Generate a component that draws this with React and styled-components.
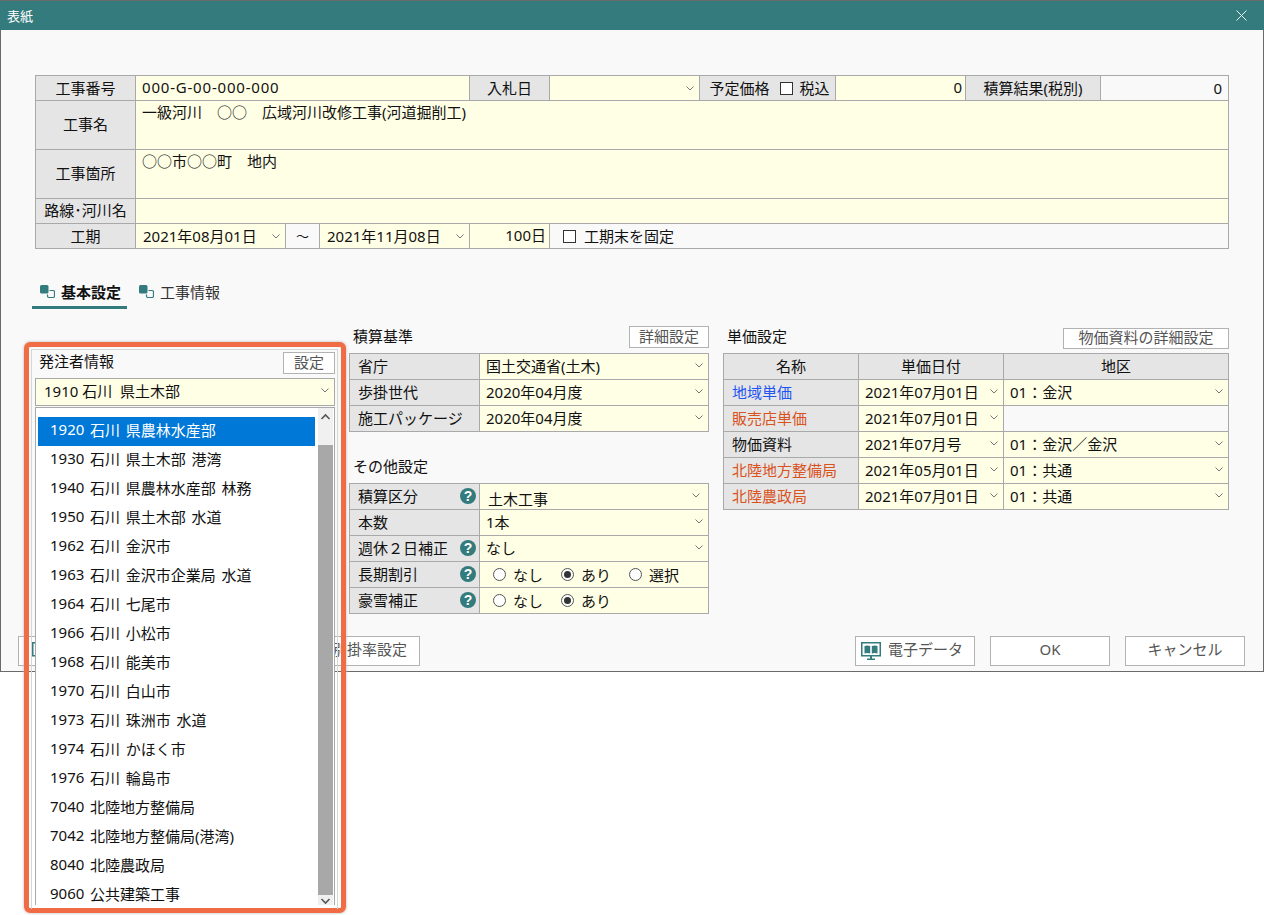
import React from "react";
import styled, { createGlobalStyle } from "styled-components";

const GlobalStyle = createGlobalStyle`
  html, body {
    margin: 0;
    padding: 0;
    background: #fff;
  }
  body {
    font-family: "Noto Sans", "Noto Sans CJK JP", sans-serif;
    font-size: 15px;
    color: #111;
  }
  * {
    box-sizing: border-box;
  }
`;

const teal = "#337b7c";
const line = "#a9a9a9";
const cream = "#ffffe5";

const Page = styled.div`
  height: 915px;
  overflow: hidden;
`;

const Window = styled.div`
  position: relative;
  display: flex;
  flex-direction: column;
  height: 672px;
  background: #f9f9f9;
  border: 1px solid #6a6a6a;
`;

const TitleBar = styled.div`
  display: flex;
  align-items: center;
  justify-content: space-between;
  flex: none;
  height: 29px;
  margin: 0 -1px;
  padding: 0 17px 1px 7px;
  background: ${teal};
  color: #fff;
  font-size: 13px;
`;

const Content = styled.div`
  display: flex;
  flex-direction: column;
  padding: 45px 34px 0 34px;
`;

const Grid = styled.div`
  border-top: 1px solid ${line};
  border-left: 1px solid ${line};
`;

const Row = styled.div`
  display: grid;
  grid-template-columns: ${(p) => p.$cols};
  grid-template-rows: minmax(0, 1fr);
  height: ${(p) => p.$h || 26}px;
`;

const Cell = styled.div`
  display: flex;
  align-items: center;
  min-width: 0;
  white-space: nowrap;
  line-height: 20px;
  padding: 0 ${(p) => p.$pr ?? 6}px 0 ${(p) => p.$pl ?? 6}px;
  border-right: 1px solid ${line};
  border-bottom: 1px solid ${line};
  background: ${(p) => p.$bg || cream};
`;

const SmallGrid = styled(Grid)`
  ${Cell} {
    padding-bottom: 2px;
  }
`;

const Label = styled(Cell)`
  background: #e5e5e5;
  justify-content: center;
  padding-bottom: ${(p) => p.$pb || 0}px;
  color: ${(p) => p.$color || "#111"};
`;

const SideLabel = styled(Label)`
  justify-content: space-between;
  padding-left: ${(p) => p.$pl ?? 8}px;
`;

const SelectCell = styled(Cell)`
  justify-content: space-between;
  padding-right: ${(p) => p.$pr ?? 5}px;
`;

const LowText = styled.span`
  margin-top: 6px;
`;

const TopText = styled(Cell)`
  align-items: flex-start;
  line-height: 22px;
  letter-spacing: ${(p) => p.$ls || 0}px;
  justify-content: ${(p) => (p.$right ? "flex-end" : "flex-start")};
`;

const TotalCell = styled(Cell)`
  justify-content: flex-end;
  background: #f9f9f9;
`;

const TildeCell = styled(Cell)`
  justify-content: center;
  padding: 0;
  background: #f9f9f9;
  font-size: 13px;
`;

const Chevron = styled.svg`
  flex: none;
  width: 8px;
  height: 5px;
  fill: none;
  stroke: #777;
  stroke-width: 1;
`;

const Arrow = () => (
  <Chevron viewBox="0 0 8 5">
    <path d="M0.5 0.5 L4 4 L7.5 0.5" />
  </Chevron>
);

const Check = styled.span`
  flex: none;
  display: inline-block;
  width: 13px;
  height: 13px;
  margin: ${(p) => p.$m || "0"};
  background: #fff;
  border: 1px solid #333;
`;

const Tabs = styled.div`
  display: flex;
  gap: 4px;
  margin: 32px 0 0 -3px;
`;

const Tab = styled.div`
  display: flex;
  align-items: center;
  gap: 6px;
  height: 28px;
  padding: 0 6px 5px 8px;
  font-weight: ${(p) => (p.$active ? 700 : 400)};
  color: ${(p) => (p.$active ? "#111" : "#333")};
  border-bottom: 3px solid ${(p) => (p.$active ? teal : "transparent")};
`;

const Columns = styled.div`
  display: flex;
  align-items: flex-start;
  margin-top: 17px;
`;

const LeftCol = styled.div`
  position: relative;
  flex: none;
  width: 300px;
  margin: 26px 14px 0 0;
`;

const MidCol = styled.div`
  flex: none;
  width: 360px;
  margin-right: 14px;
`;

const RightCol = styled.div`
  flex: none;
  width: 506px;
`;

const SectionHead = styled.div`
  display: flex;
  justify-content: space-between;
  align-items: flex-start;
  height: 27px;
  margin-top: ${(p) => p.$mt || 0}px;
  padding-left: 4px;
  line-height: 20px;
`;

const PanelHead = styled(SectionHead)`
  height: 26px;
  line-height: 18px;
`;

const SmallButton = styled.button`
  height: ${(p) => p.$h || 22}px;
  margin-top: ${(p) => p.$mt || 0}px;
  width: ${(p) => p.$w}px;
  padding: 0 0 3px;
  background: #fff;
  border: 1px solid #b2b2b2;
  color: #555;
  font: inherit;
  line-height: 16px;
`;

const CurrentSelect = styled.div`
  display: flex;
  align-items: center;
  justify-content: space-between;
  height: 28px;
  padding: 0 5px 3px 8px;
  background: ${cream};
  border: 1px solid ${line};
  white-space: pre;
`;

const Dropdown = styled.div`
  position: absolute;
  top: 55px;
  left: 0;
  z-index: 2;
  display: flex;
  width: 300px;
  height: 498px;
  background: #fff;
  border: 1px solid ${line};
  border-bottom: 0;
  overflow: hidden;
`;

const Options = styled.div`
  flex: none;
  width: 277px;
  margin: 9px 3px 0 2px;
`;

const Option = styled.div`
  display: flex;
  align-items: center;
  height: 29px;
  padding: 0 0 5px 12px;
  white-space: pre;
  word-spacing: -1px;
  background: ${(p) => (p.$selected ? "#0078d7" : "transparent")};
  color: ${(p) => (p.$selected ? "#fff" : "#111")};
`;

const OptionCode = styled.span`
  flex: none;
  width: 40px;
`;

const Scrollbar = styled.div`
  flex: none;
  width: 15px;
  background: #f0f0f0;
`;

const ScrollArrow = styled.svg`
  display: block;
  width: 15px;
  height: ${(p) => p.$h}px;
  fill: none;
  stroke: #555;
  stroke-width: 1.6;
`;

const Thumb = styled.div`
  height: 450px;
  margin-top: 19px;
  background: #a8a8a8;
`;

const Highlight = styled.div`
  position: absolute;
  top: -10px;
  left: -11px;
  z-index: 3;
  width: 322px;
  height: 571px;
  border: 5px solid #f06c45;
  border-radius: 6px;
  box-shadow: 0 0 2px 1px rgba(190, 190, 190, 0.55);
  pointer-events: none;

  &::before {
    content: "";
    position: absolute;
    inset: 2px 3px -1px 2px;
    border: 1px solid #d6d6d6;
    border-bottom: 0;
  }
`;

const Help = styled.span`
  flex: none;
  display: flex;
  align-items: center;
  justify-content: center;
  width: 16px;
  height: 16px;
  border-radius: 50%;
  background: ${teal};
  color: #fff;
  font-family: "Liberation Sans", sans-serif;
  font-size: 14px;
  font-weight: 700;
`;

const Radios = styled.div`
  display: flex;
  gap: 18px;
  margin-top: 2px;
`;

const RadioItem = styled.span`
  display: inline-flex;
  align-items: center;
  gap: 7px;
`;

const RadioDot = styled.span`
  flex: none;
  display: flex;
  align-items: center;
  justify-content: center;
  width: 13px;
  height: 13px;
  border-radius: 50%;
  border: 1px solid #555;
  background: #fff;

  &::after {
    content: "";
    display: ${(p) => (p.$checked ? "block" : "none")};
    width: 7px;
    height: 7px;
    border-radius: 50%;
    background: #333;
  }
`;

const Footer = styled.div`
  display: flex;
  margin-top: auto;
  padding: 0 18px 5px 17px;
`;

const FooterButton = styled.button`
  display: flex;
  align-items: center;
  justify-content: ${(p) => p.$justify || "center"};
  gap: 7px;
  width: ${(p) => p.$w}px;
  height: 30px;
  margin-left: ${(p) => p.$ml || 0}px;
  padding: 0 ${(p) => p.$pr || 0}px 5px ${(p) => p.$pl || 0}px;
  background: #fff;
  border: 1px solid #b2b2b2;
  color: #555;
  font: inherit;
  white-space: nowrap;
`;

const Spacer = styled.div`
  flex: 1;
`;

const MonitorSvg = styled.svg`
  flex: none;
  margin-top: 5px;
`;

const TabIcon = () => (
  <svg width="15" height="13" viewBox="0 0 15 13">
    <rect x="0" y="0" width="8.5" height="8.5" rx="1.5" fill={teal} />
    <path d="M9.5 5.5 H13 a1.5 1.5 0 0 1 1.5 1.5 V11 a1.5 1.5 0 0 1 -1.5 1.5 H9 a1.5 1.5 0 0 1 -1.5 -1.5 V9.5" fill="none" stroke={teal} strokeWidth="1.2" />
  </svg>
);

const MonitorIcon = () => (
  <MonitorSvg width="20" height="18" viewBox="0 0 20 18">
    <rect x="0.75" y="0.75" width="18.5" height="13" fill="#fff" stroke={teal} strokeWidth="1.5" />
    <path d="M3.5 4 Q6 3 9.2 4 V11.5 Q6 10.5 3.5 11.5 Z M10.8 4 Q14 3 16.5 4 V11.5 Q14 10.5 10.8 11.5 Z" fill={teal} />
    <path d="M9 14 H11 V16.5 H14 V18 H6 V16.5 H9 Z" fill={teal} />
  </MonitorSvg>
);

const CloseIcon = () => (
  <svg width="11" height="11" viewBox="0 0 11 11" fill="none" stroke="#fff" strokeWidth="0.9">
    <path d="M0.5 0.5 L10.5 10.5 M10.5 0.5 L0.5 10.5" />
  </svg>
);

const topCols = "100px 334px 80px 150px 136px 130px 135px 128px";
const wideCols = "100px 1fr";
const termCols = "100px 150px 34px 150px 80px 1fr";
const midCols = "130px 229px";
const priceCols = "135px 145px 225px";

const options = [
  ["1920", "石川  県農林水産部"],
  ["1930", "石川  県土木部  港湾"],
  ["1940", "石川  県農林水産部  林務"],
  ["1950", "石川  県土木部  水道"],
  ["1962", "石川  金沢市"],
  ["1963", "石川  金沢市企業局  水道"],
  ["1964", "石川  七尾市"],
  ["1966", "石川  小松市"],
  ["1968", "石川  能美市"],
  ["1970", "石川  白山市"],
  ["1973", "石川  珠洲市  水道"],
  ["1974", "石川  かほく市"],
  ["1976", "石川  輪島市"],
  ["7040", "北陸地方整備局"],
  ["7042", "北陸地方整備局(港湾)"],
  ["8040", "北陸農政局"],
  ["9060", "公共建築工事"],
];

const prices = [
  { name: "地域単価", color: "#1f55f0", date: "2021年07月01日", area: "01：金沢" },
  { name: "販売店単価", color: "#d9531e", date: "2021年07月01日", area: null },
  { name: "物価資料", color: "#111", date: "2021年07月号", area: "01：金沢／金沢" },
  { name: "北陸地方整備局", color: "#d9531e", date: "2021年05月01日", area: "01：共通" },
  { name: "北陸農政局", color: "#d9531e", date: "2021年07月01日", area: "01：共通" },
];

const Radio = ({ checked, children }) => (
  <RadioItem>
    <RadioDot $checked={checked} />
    {children}
  </RadioItem>
);

const App = () => {
  return (
    <Page>
      <GlobalStyle />
      <Window>
        <TitleBar>
          表紙
          <CloseIcon />
        </TitleBar>
        <Content>
          <Grid>
            <Row $cols={topCols} $h={25}>
              <Label>工事番号</Label>
              <TopText $ls={0.8}>000-G-00-000-000</TopText>
              <Label>入札日</Label>
              <SelectCell>
                <span />
                <Arrow />
              </SelectCell>
              <Label $pl={4} $pr={0}>
                予定価格
                <Check $m="0 7px 0 10px" />
                税込
              </Label>
              <TopText $right $pr={3}>0</TopText>
              <Label>積算結果(税別)</Label>
              <TotalCell>0</TotalCell>
            </Row>
            <Row $cols={wideCols} $h={49}>
              <Label $pb={2}>工事名</Label>
              <TopText>一級河川　○○　広域河川改修工事(河道掘削工)</TopText>
            </Row>
            <Row $cols={wideCols} $h={49}>
              <Label $pb={2}>工事箇所</Label>
              <TopText>○○市○○町　地内</TopText>
            </Row>
            <Row $cols={wideCols} $h={25}>
              <Label $pl={0} $pr={0} $pb={2}>路線･河川名</Label>
              <Cell />
            </Row>
            <Row $cols={termCols} $h={25}>
              <Label $pb={1}>工期</Label>
              <SelectCell $pl={7}>
                2021年08月01日
                <Arrow />
              </SelectCell>
              <TildeCell>〜</TildeCell>
              <SelectCell $pl={7}>
                2021年11月08日
                <Arrow />
              </SelectCell>
              <TopText $right $pr={3}>100日</TopText>
              <Cell $bg="#f9f9f9" $pl={13}>
                <Check $m="0 8px 0 0" />
                工期末を固定
              </Cell>
            </Row>
          </Grid>

          <Tabs>
            <Tab $active>
              <TabIcon />
              基本設定
            </Tab>
            <Tab>
              <TabIcon />
              工事情報
            </Tab>
          </Tabs>

          <Columns>
            <LeftCol>
              <PanelHead>
                発注者情報
                <SmallButton $w={52}>設定</SmallButton>
              </PanelHead>
              <CurrentSelect>
                1910 石川  県土木部
                <Arrow />
              </CurrentSelect>
              <Dropdown>
                <Options>
                  {options.map(([code, name], i) => (
                    <Option key={code} $selected={i === 0}>
                      <OptionCode>{code}</OptionCode>
                      {name}
                    </Option>
                  ))}
                </Options>
                <Scrollbar>
                  <ScrollArrow $h={18} viewBox="0 0 15 18">
                    <path d="M3.5 11 L7.5 7 L11.5 11" />
                  </ScrollArrow>
                  <Thumb />
                  <ScrollArrow $h={12} viewBox="0 0 15 12">
                    <path d="M3.5 4 L7.5 8 L11.5 4" />
                  </ScrollArrow>
                </Scrollbar>
              </Dropdown>
              <Highlight />
            </LeftCol>

            <MidCol>
              <SectionHead>
                積算基準
                <SmallButton $w={80}>詳細設定</SmallButton>
              </SectionHead>
              <SmallGrid>
                <Row $cols={midCols}>
                  <SideLabel>省庁</SideLabel>
                  <SelectCell>
                    国土交通省(土木)
                    <Arrow />
                  </SelectCell>
                </Row>
                <Row $cols={midCols}>
                  <SideLabel>歩掛世代</SideLabel>
                  <SelectCell>
                    2020年04月度
                    <Arrow />
                  </SelectCell>
                </Row>
                <Row $cols={midCols}>
                  <SideLabel>施工パッケージ</SideLabel>
                  <SelectCell>
                    2020年04月度
                    <Arrow />
                  </SelectCell>
                </Row>
              </SmallGrid>

              <SectionHead $mt={24}>その他設定</SectionHead>
              <SmallGrid>
                <Row $cols={midCols}>
                  <SideLabel $pr={3}>
                    積算区分
                    <Help>?</Help>
                  </SideLabel>
                  <SelectCell $pl={8} $pr={8}>
                    <LowText>土木工事</LowText>
                    <Arrow />
                  </SelectCell>
                </Row>
                <Row $cols={midCols}>
                  <SideLabel>本数</SideLabel>
                  <SelectCell>
                    1本
                    <Arrow />
                  </SelectCell>
                </Row>
                <Row $cols={midCols}>
                  <SideLabel $pr={3}>
                    週休２日補正
                    <Help>?</Help>
                  </SideLabel>
                  <SelectCell>
                    なし
                    <Arrow />
                  </SelectCell>
                </Row>
                <Row $cols={midCols}>
                  <SideLabel $pr={3}>
                    長期割引
                    <Help>?</Help>
                  </SideLabel>
                  <Cell $pl={13}>
                    <Radios>
                      <Radio>なし</Radio>
                      <Radio checked>あり</Radio>
                      <Radio>選択</Radio>
                    </Radios>
                  </Cell>
                </Row>
                <Row $cols={midCols}>
                  <SideLabel $pr={3}>
                    豪雪補正
                    <Help>?</Help>
                  </SideLabel>
                  <Cell $pl={13}>
                    <Radios>
                      <Radio>なし</Radio>
                      <Radio checked>あり</Radio>
                    </Radios>
                  </Cell>
                </Row>
              </SmallGrid>
            </MidCol>

            <RightCol>
              <SectionHead>
                単価設定
                <SmallButton $w={166} $h={21} $mt={2}>物価資料の詳細設定</SmallButton>
              </SectionHead>
              <SmallGrid>
                <Row $cols={priceCols}>
                  <Label>名称</Label>
                  <Label>単価日付</Label>
                  <Label>地区</Label>
                </Row>
                {prices.map((p) => (
                  <Row key={p.name} $cols={priceCols}>
                    <SideLabel $color={p.color}>{p.name}</SideLabel>
                    <SelectCell>
                      {p.date}
                      <Arrow />
                    </SelectCell>
                    {p.area ? (
                      <SelectCell>
                        {p.area}
                        <Arrow />
                      </SelectCell>
                    ) : (
                      <Cell $bg="#f9f9f9" />
                    )}
                  </Row>
                ))}
              </SmallGrid>
            </RightCol>
          </Columns>
        </Content>

        <Footer>
          <FooterButton $w={262} $justify="flex-start" $pl={13}>
            <MonitorIcon />
          </FooterButton>
          <FooterButton $w={131} $ml={9} $justify="flex-end" $pr={12}>
            別掛率設定
          </FooterButton>
          <Spacer />
          <FooterButton $w={120} $justify="flex-start" $pl={5}>
            <MonitorIcon />
            電子データ
          </FooterButton>
          <FooterButton $w={120} $ml={15}>OK</FooterButton>
          <FooterButton $w={120} $ml={15}>キャンセル</FooterButton>
        </Footer>
      </Window>
    </Page>
  );
};

export default App;
